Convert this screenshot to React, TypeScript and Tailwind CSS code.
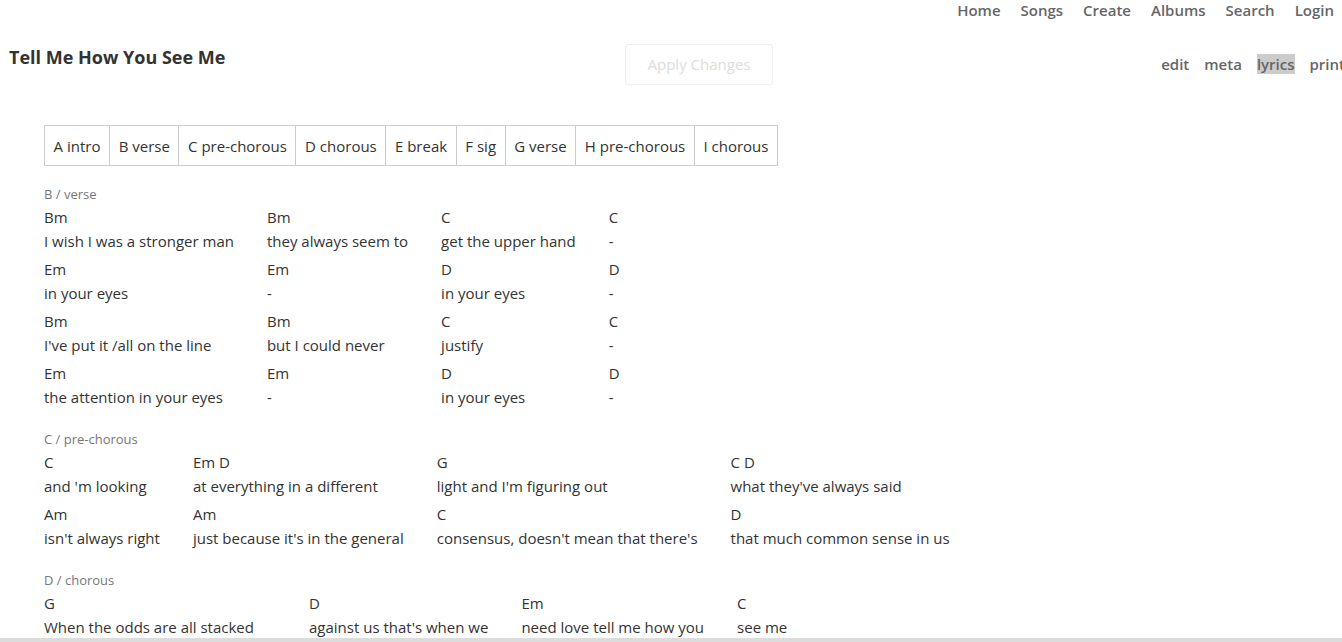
import React from 'react';

type Row = { chords: string[]; lyrics: string[] };
type Section = { label: string; rows: Row[]; firstColMin?: string };

const NAV = ['Home', 'Songs', 'Create', 'Albums', 'Search', 'Login'];
const TABS = ['A intro', 'B verse', 'C pre-chorous', 'D chorous', 'E break', 'F sig', 'G verse', 'H pre-chorous', 'I chorous'];

const SECTIONS: Section[] = [
  {
    label: 'B / verse',
    rows: [
      { chords: ['Bm', 'Bm', 'C', 'C'], lyrics: ['I wish I was a stronger man', 'they always seem to', 'get the upper hand', '-'] },
      { chords: ['Em', 'Em', 'D', 'D'], lyrics: ['in your eyes', '-', 'in your eyes', '-'] },
      { chords: ['Bm', 'Bm', 'C', 'C'], lyrics: ["I've put it /all on the line", 'but I could never', 'justify', '-'] },
      { chords: ['Em', 'Em', 'D', 'D'], lyrics: ['the attention in your eyes', '-', 'in your eyes', '-'] },
    ],
  },
  {
    label: 'C / pre-chorous',
    rows: [
      { chords: ['C', 'Em D', 'G', 'C D'], lyrics: ["and 'm looking", 'at everything in a different', "light and I'm figuring out", "what they've always said"] },
      { chords: ['Am', 'Am', 'C', 'D'], lyrics: ["isn't always right", "just because it's in the general", "consensus, doesn't mean that there's", 'that much common sense in us'] },
    ],
  },
  {
    label: 'D / chorous',
    firstColMin: 'min-w-[265px]',
    rows: [
      { chords: ['G', 'D', 'Em', 'C'], lyrics: ['When the odds are all stacked', "against us that's when we", 'need love tell me how you', 'see me'] },
      { chords: ['G', 'D', 'Em', 'C'], lyrics: ['-', '-', '-', '-'] },
    ],
  },
];

function SectionTable({ section }: { section: Section }) {
  return (
    <div className="mb-[17px]">
      <div className="text-[13px] leading-[20px] text-[#777]">{section.label}</div>
      <table className="border-collapse">
        <tbody>
          {section.rows.map((row, ri) => (
            <React.Fragment key={ri}>
              <tr>
                {row.chords.map((c, ci) => (
                  <td key={ci} className={`p-0 pr-[33px] pt-[1px] h-[24px] leading-[24px] align-middle whitespace-nowrap ${ci === 0 ? section.firstColMin ?? '' : ''}`}>
                    {c}
                  </td>
                ))}
              </tr>
              <tr>
                {row.lyrics.map((l, ci) => (
                  <td key={ci} className="p-0 pr-[33px] pb-[3px] leading-[24px] align-top whitespace-nowrap">
                    {l}
                  </td>
                ))}
              </tr>
            </React.Fragment>
          ))}
        </tbody>
      </table>
    </div>
  );
}

export default function App() {
  return (
    <div className="min-h-screen bg-white text-[15px] text-[#333] overflow-x-hidden" style={{ fontFamily: '"Open Sans", "Noto Sans", sans-serif' }}>
      <nav className="flex justify-end gap-[20px] pr-[8px] h-[20px] leading-[20px] text-[15px] font-semibold text-[#666]">
        {NAV.map((n) => (
          <span key={n}>{n}</span>
        ))}
      </nav>

      <div className="flex items-start mt-[24px] h-[81px]">
        <h1 className="pl-[9px] text-[18px] font-bold leading-[26px] text-[#333] w-[625px]">Tell Me How You See Me</h1>
        <button type="button" className="w-[148px] h-[41px] border border-[#eee] rounded-[3px] text-[15px] text-[#ddd]">
          Apply Changes
        </button>
        <div className="flex-1 flex justify-end gap-[15px] mt-[10px] -mr-[3px] text-[15px] font-semibold text-[#666] leading-[20px]">
          <span>edit</span>
          <span>meta</span>
          <span className="bg-[#ccc]">lyrics</span>
          <span>print</span>
        </div>
      </div>

      <div className="pl-[44px]">
        <div className="inline-flex border border-[#ccc]">
          {TABS.map((t, i) => (
            <div key={t} className={`px-[8.6px] pt-[1px] h-[39px] leading-[38px] whitespace-nowrap ${i > 0 ? 'border-l border-[#ccc]' : ''}`}>
              {t}
            </div>
          ))}
        </div>

        <div className="mt-[18px]">
          {SECTIONS.map((s) => (
            <SectionTable key={s.label} section={s} />
          ))}
        </div>
      </div>

      <div className="fixed left-0 right-0 bottom-0 h-[4px] bg-[#dcdcdc]" />
    </div>
  );
}
